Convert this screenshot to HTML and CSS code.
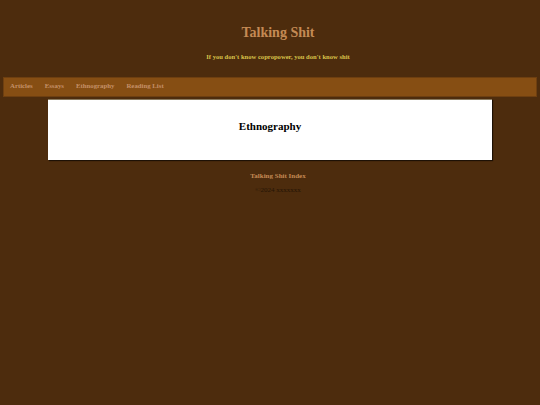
FILE: index.html
```html
<!DOCTYPE html>
<html>
<head>
<meta charset="utf-8">
<link rel="stylesheet" href="styles.css">
</head>
<body>
<header class="site-header">
  <h1 class="site-title">Talking Shit</h1>
  <p class="tagline">If you don't know copropower, you don't know shit</p>
</header>
<nav class="main-nav">
  <a href="#">Articles</a>
  <a href="#">Essays</a>
  <a href="#">Ethnography</a>
  <a href="#">Reading List</a>
</nav>
<main class="content">
  <h2 class="page-title">Ethnography</h2>
</main>
<footer class="site-footer">
  <a href="#" class="footer-link">Talking Shit Index</a>
  <p class="copy">©2024 xxxxxxx</p>
</footer>
</body>
</html>
```

FILE: styles.css
```css
html, body {
  background: #4d2c0d;
}
body {
  margin: 0;
  padding: 0 3px;
  font-family: "Liberation Serif", "Times New Roman", serif;
}
.site-header {
  text-align: center;
  padding: 24px 0 15px 16px;
}
.site-title {
  margin: 0;
  font-size: 14px;
  line-height: 18px;
  color: #c48a54;
  font-weight: bold;
}
.tagline {
  margin: 10px 0 0;
  font-size: 6.6px;
  line-height: 10px;
  font-weight: bold;
  color: #d8c24a;
}
.main-nav {
  display: flex;
  gap: 12px;
  align-items: center;
  height: 20px;
  box-sizing: border-box;
  padding: 0 6px 2px;
  background: #864e13;
  border: 1px solid #6e3f10;
}
.main-nav a {
  font-size: 6.8px;
  line-height: 8px;
  font-weight: bold;
  color: #c49068;
  text-decoration: none;
}
.content {
  width: 444px;
  height: 61px;
  box-sizing: border-box;
  margin: 2px auto 0;
  background: #ffffff;
  border-top: 1px solid #8a7a5e;
  box-shadow: 1px 1px 1px rgba(0,0,0,0.6);
  display: flex;
  align-items: center;
  justify-content: center;
}
.page-title {
  margin: 0 0 8px;
  font-size: 11px;
  font-weight: bold;
  color: #000;
}
.site-footer {
  text-align: center;
  padding: 12px 0 0 16px;
}
.footer-link {
  display: block;
  font-size: 7px;
  line-height: 9px;
  font-weight: bold;
  color: #c48a54;
  text-decoration: none;
}
.copy {
  margin: 5px 0 0;
  font-size: 7px;
  line-height: 9px;
  color: #241405;
}
```
